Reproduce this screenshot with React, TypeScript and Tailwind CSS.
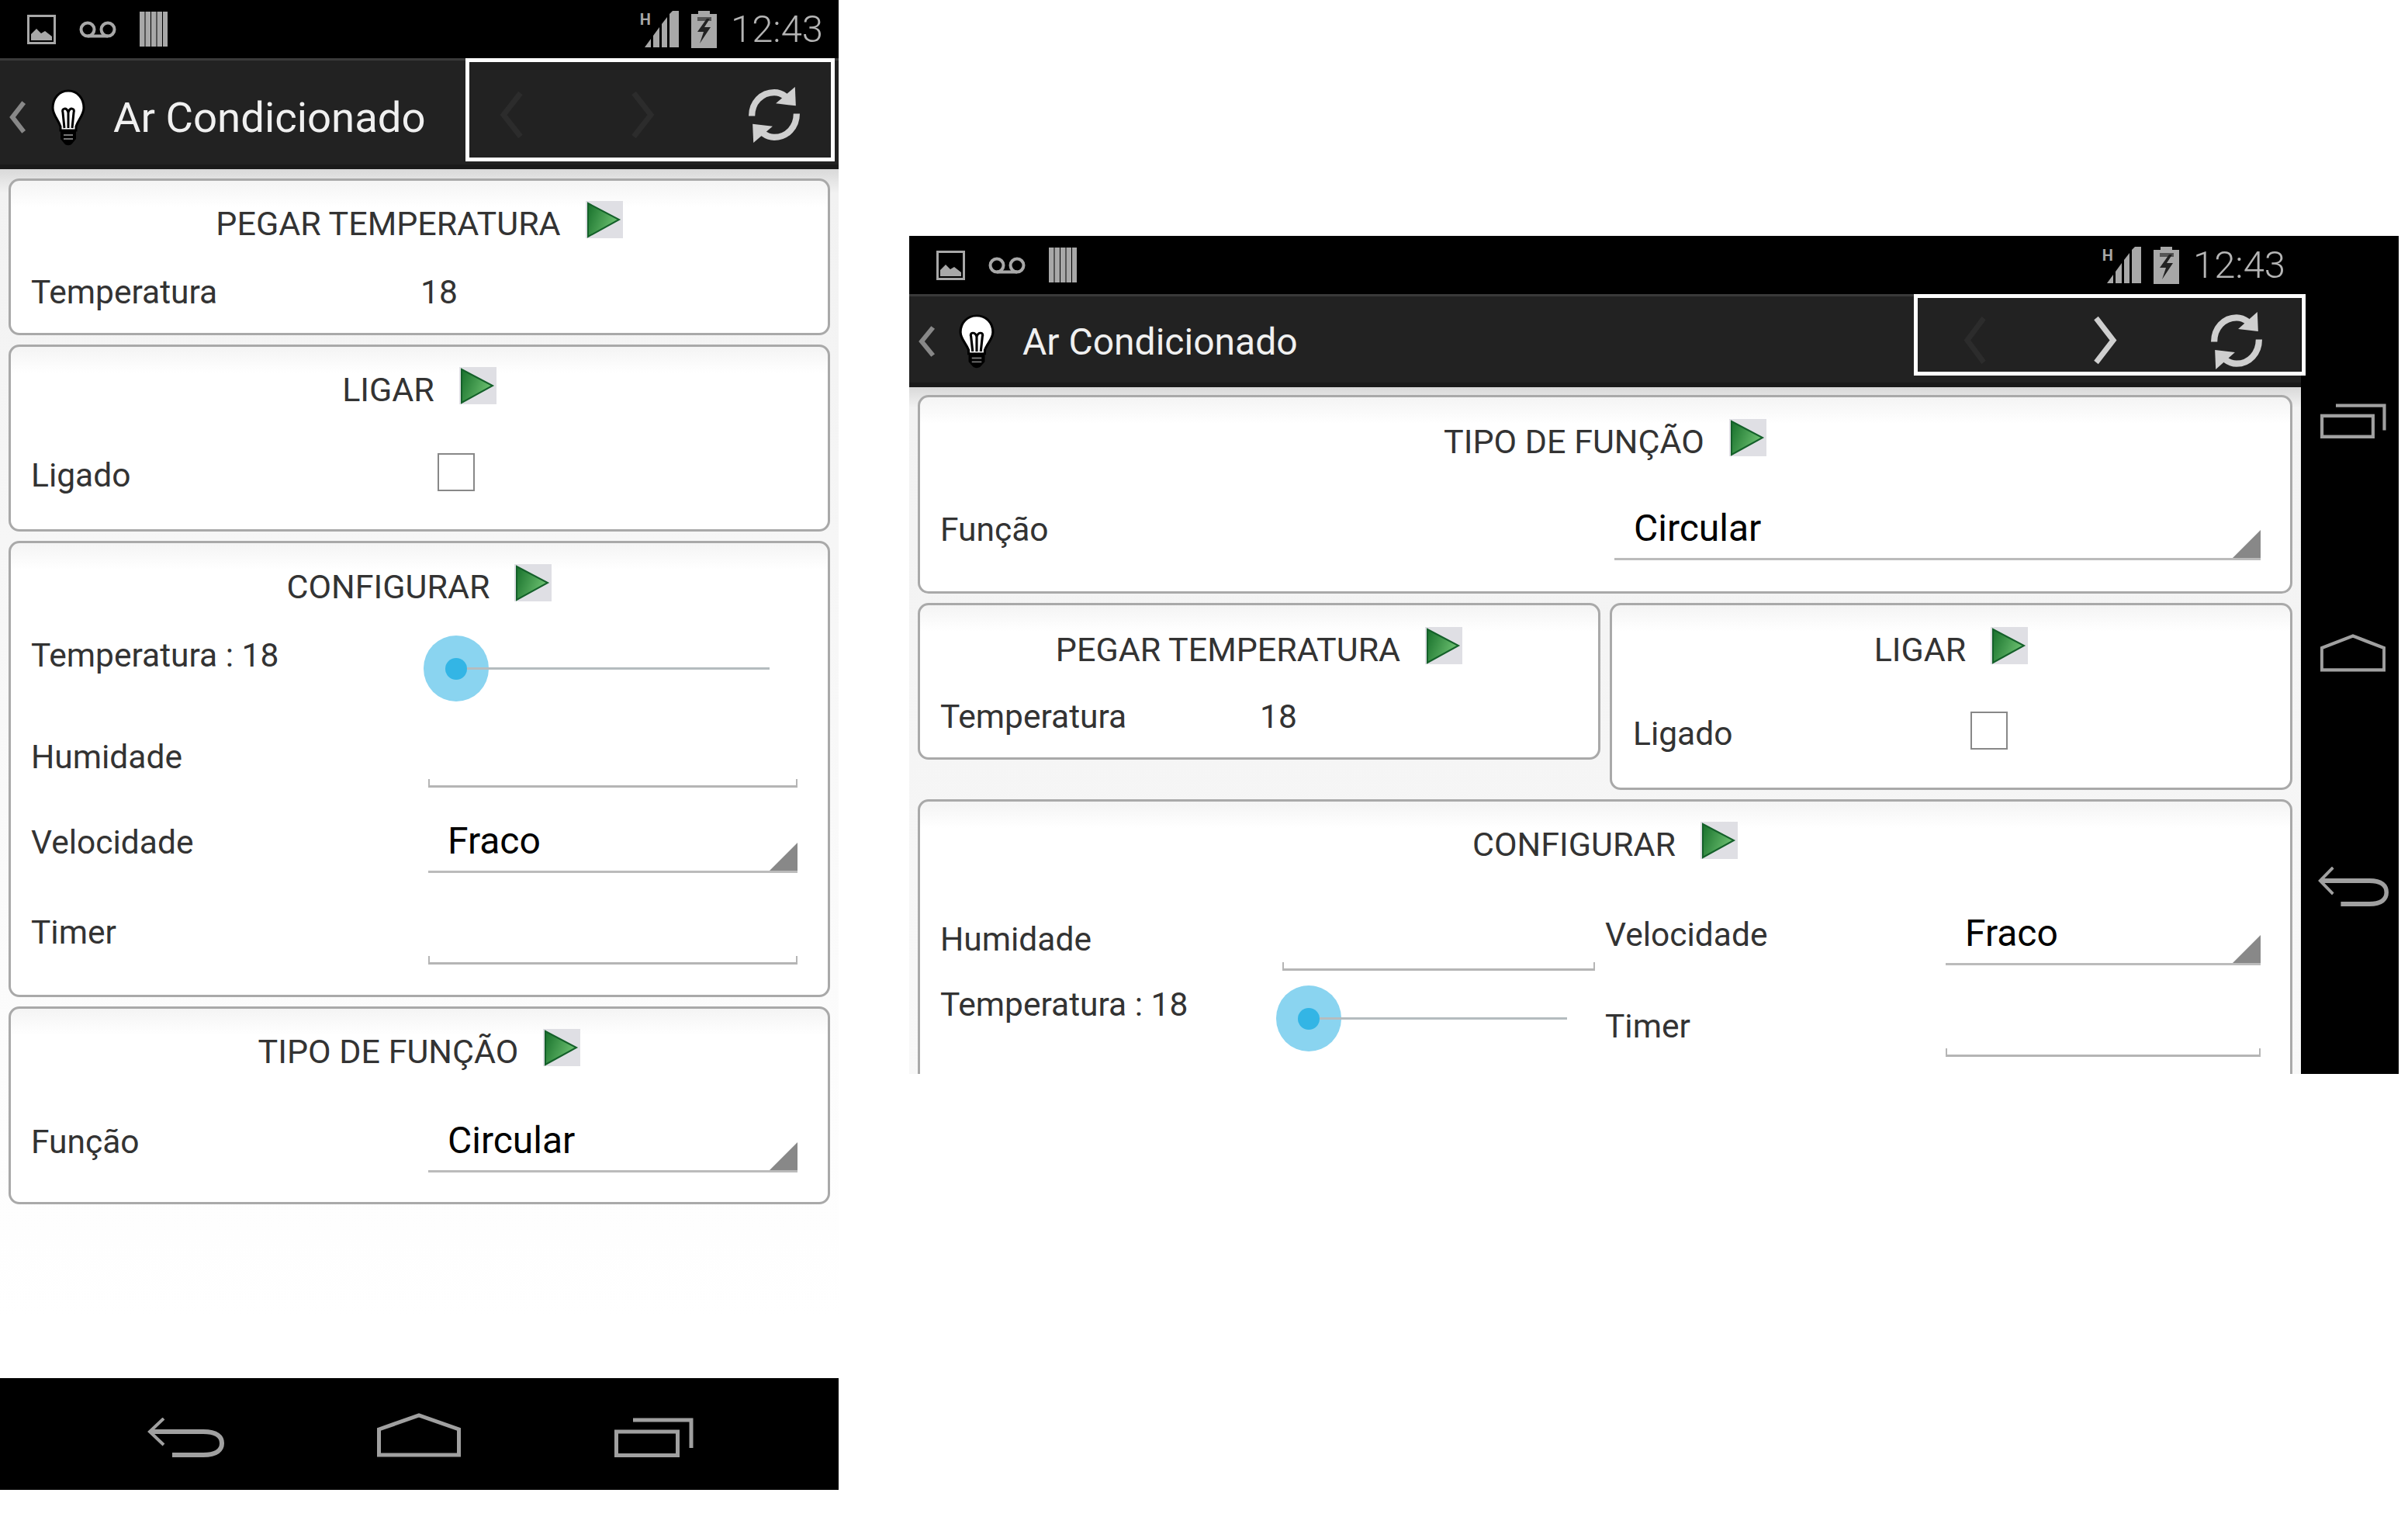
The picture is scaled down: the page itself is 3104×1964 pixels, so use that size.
import type { ReactNode } from "react";

const ICON = "#a8a8a8";

function PictureIcon() {
  return (
    <svg width="37" height="38" viewBox="0 0 37 38">
      <rect x="1.5" y="1.5" width="34" height="35" fill="none" stroke={ICON} strokeWidth="3" />
      <path d="M5 33V25L12 18L18 24L23 21L32 28V33Z" fill={ICON} />
    </svg>
  );
}

function VoicemailIcon() {
  return (
    <svg width="48" height="22" viewBox="0 0 48 22">
      <circle cx="11" cy="11" r="8.5" fill="none" stroke={ICON} strokeWidth="4" />
      <circle cx="37" cy="11" r="8.5" fill="none" stroke={ICON} strokeWidth="4" />
      <path d="M11 19.5H37" stroke={ICON} strokeWidth="4" />
    </svg>
  );
}

function BarcodeIcon() {
  return (
    <svg width="36" height="45" viewBox="0 0 36 45">
      {[0, 7.5, 15, 22.5, 30].map((x) => (
        <rect key={x} x={x} y="0" width="6.5" height="45" fill={ICON} />
      ))}
    </svg>
  );
}

function SignalIcon() {
  return (
    <svg width="44" height="47" viewBox="0 0 44 47">
      <path d="M0 47L8 36V47Z" fill={ICON} />
      <path d="M11 47V32L19 21V47Z" fill={ICON} />
      <path d="M22 47V17L29 8V47Z" fill={ICON} />
      <path d="M32 47V4L36 0H44V47Z" fill={ICON} />
    </svg>
  );
}

function BatteryIcon() {
  return (
    <svg width="33" height="48" viewBox="0 0 33 48">
      <path d="M9 0H24V4H33V48H0V4H9Z" fill={ICON} />
      <path d="M8 8H26V13H8Z" fill="#555" />
      <path d="M20 10L8 27H16L11 42L25 21H17L24 10Z" fill="#222" />
    </svg>
  );
}

function Chevron({ dir, color, w, h, sw = 7 }: { dir: "left" | "right"; color: string; w: number; h: number; sw?: number }) {
  const d = dir === "left" ? "M28 3L6 31L28 59" : "M5 3L27 31L5 59";
  return (
    <svg width={w} height={h} viewBox="0 0 33 62" preserveAspectRatio="none" className="shrink-0">
      <path d={d} fill="none" stroke={color} strokeWidth={sw} />
    </svg>
  );
}

function RefreshIcon({ w, h }: { w: number; h: number }) {
  return (
    <svg width={w} height={h} viewBox="0 0 64 71" preserveAspectRatio="none" className="shrink-0">
      <path d="M4 37C4 20 16 7 32 7C38 7 42 9 46 12" fill="none" stroke="#cfcfcf" strokeWidth="8" />
      <path d="M58 0L59 24L34 21Z" fill="#cfcfcf" />
      <path d="M60 34C60 51 48 64 32 64C26 64 22 62 18 59" fill="none" stroke="#cfcfcf" strokeWidth="8" />
      <path d="M6 71L5 47L30 50Z" fill="#cfcfcf" />
    </svg>
  );
}

function BulbIcon({ w, h }: { w: number; h: number }) {
  return (
    <svg width={w} height={h} viewBox="0 0 44 73" preserveAspectRatio="none" className="shrink-0">
      <path d="M22 2C10 2 2 12 2 24C2 33 9 39 12 48V53H32V48C35 39 42 33 42 24C42 12 34 2 22 2Z" fill="#fff" stroke="#000" strokeWidth="3" />
      <path d="M17 50L15 30C13 24 20 23 22 30C24 23 31 24 29 30L27 50M22 30V50" fill="none" stroke="#000" strokeWidth="3" />
      <path d="M12 52H32V64L27 70C25 73 19 73 17 70L12 64Z" fill="#000" />
      <path d="M16 59H28M16 64H28" stroke="#777" strokeWidth="2" />
    </svg>
  );
}

function BackNav({ w, h }: { w: number; h: number }) {
  return (
    <svg width={w} height={h} viewBox="0 0 99 51" preserveAspectRatio="none" className="shrink-0">
      <path d="M21 1L3 18L21 35" fill="none" stroke="#a0a0a0" strokeWidth="4" />
      <path d="M4 18H72C90 18 96 25 96 33C96 41 90 48 72 48H32" fill="none" stroke="#a0a0a0" strokeWidth="6" />
    </svg>
  );
}

function HomeNav({ w, h }: { w: number; h: number }) {
  return (
    <svg width={w} height={h} viewBox="0 0 108 57" preserveAspectRatio="none" className="shrink-0">
      <path d="M2.5 21L54 3L105.5 21V54H2.5Z" fill="none" stroke="#a0a0a0" strokeWidth="5" />
    </svg>
  );
}

function RecentsNav({ w, h }: { w: number; h: number }) {
  return (
    <svg width={w} height={h} viewBox="0 0 102 51" preserveAspectRatio="none" className="shrink-0">
      <path d="M24 3H99V39" fill="none" stroke="#a0a0a0" strokeWidth="5" />
      <rect x="2.5" y="18" width="79" height="30.5" fill="none" stroke="#a0a0a0" strokeWidth="5" />
    </svg>
  );
}

function PlayIcon({ id }: { id: string }) {
  return (
    <svg width="48" height="48" viewBox="0 0 48 48" className="shrink-0">
      <defs>
        <linearGradient id={id} x1="0" y1="0" x2="1" y2="0.4">
          <stop offset="0" stopColor="#17702b" />
          <stop offset="1" stopColor="#6cc070" />
        </linearGradient>
      </defs>
      <rect width="48" height="48" fill="#dfdfe4" />
      <path d="M3 3L43 24L3 46Z" fill={`url(#${id})`} stroke="#14602a" strokeWidth="2" />
    </svg>
  );
}

function Title({ text, id, className }: { text: string; id: string; className?: string }) {
  return (
    <div className={`flex h-[48px] items-start justify-center gap-[32px] ${className ?? ""}`}>
      <span className="mt-[5px] text-[43px] leading-[48px] text-[#333]">{text}</span>
      <PlayIcon id={id} />
    </div>
  );
}

function Label({ children, className }: { children: ReactNode; className?: string }) {
  return <div className={`text-[42.5px] leading-[45px] text-[#333] ${className ?? ""}`}>{children}</div>;
}

function Card({ children, className }: { children: ReactNode; className?: string }) {
  return (
    <div className={`shrink-0 rounded-[14px] border-[3px] border-[#a9a9a9] bg-linear-to-b from-[#f4f4f4] to-white to-[34px] ${className ?? ""}`}>
      {children}
    </div>
  );
}

function Select({ value, className }: { value: string; className?: string }) {
  return (
    <div className={`relative h-[62px] shrink-0 border-b-[3px] border-[#bbb] pl-[25px] text-[48px] leading-[41px] text-black ${className ?? ""}`}>
      {value}
      <div className="absolute bottom-0 right-0 h-[36px] w-[36px] bg-[#888] [clip-path:polygon(100%_0,100%_100%,0_100%)]" />
    </div>
  );
}

function TextInput({ className }: { className?: string }) {
  return <div className={`shrink-0 self-end h-[11px] border-x-2 border-b-[3px] border-[#b5b5b5] ${className ?? ""}`} />;
}

function Checkbox({ className }: { className?: string }) {
  return <div className={`h-[49px] w-[48px] shrink-0 border-2 border-[#888] bg-white ${className ?? ""}`} />;
}

function Slider({ className }: { className?: string }) {
  return (
    <div className={`flex h-[85px] shrink-0 items-center ${className ?? ""}`}>
      <div className="flex h-[85px] w-[84px] shrink-0 items-center justify-center rounded-full bg-[#8ad4f0]">
        <div className="h-[28px] w-[28px] rounded-full bg-[#33b5e5]" />
      </div>
      <div className="-ml-[28px] h-[3px] flex-1 bg-[#b4bcbf]" />
    </div>
  );
}

function StatusBar() {
  return (
    <div className="flex h-[75px] shrink-0 items-center justify-between bg-black pl-[35px] pr-[20px]">
      <div className="flex items-center gap-[30px]">
        <PictureIcon />
        <VoicemailIcon />
        <BarcodeIcon />
      </div>
      <div className="flex items-center">
        <span className="-mr-[8px] mb-[25px] text-[20px] font-bold leading-[20px] text-[#a8a8a8]">H</span>
        <SignalIcon />
        <div className="ml-[16px]">
          <BatteryIcon />
        </div>
        <span className="ml-[18px] text-[49px] font-light leading-[48px] text-[#b5b5b5]">12:43</span>
      </div>
    </div>
  );
}

function Portrait() {
  return (
    <div className="flex h-[1920px] w-[1081px] shrink-0 flex-col">
      <StatusBar />
      <div className="flex h-[143px] shrink-0 items-start border-t-[3px] border-b-[6px] border-t-[#3a3a3a] border-b-[#1a1a1a] bg-[#222]">
        <div className="flex h-[134px] w-[600px] items-center pl-[12px] pt-[12px]">
          <Chevron dir="left" color="#888" w={22} h={42} sw={9} />
          <div className="ml-[32px]">
            <BulbIcon w={44} h={73} />
          </div>
          <span className="ml-[36px] text-[54.5px] leading-[56px] text-[#f0f0f0]">Ar Condicionado</span>
        </div>
        <div className="-mt-[3px] flex h-[133px] w-[476px] items-center border-[5px] border-white pl-[38px] pt-[12px]">
          <Chevron dir="left" color="#2c2c2c" w={33} h={62} />
          <div className="ml-[136px]">
            <Chevron dir="right" color="#2c2c2c" w={33} h={62} />
          </div>
          <div className="ml-[120px]">
            <RefreshIcon w={66} h={72} />
          </div>
        </div>
      </div>
      <div className="flex h-[1558px] shrink-0 flex-col gap-[12px] bg-linear-to-b from-[#d9d9d9] via-[#f2f2f2] via-[2%] to-white to-[95%] px-[11px] pt-[12px]">
        <Card className="h-[202px] pt-[26px]">
          <Title text="PEGAR TEMPERATURA" id="p1" />
          <div className="mt-[47px] flex pl-[26px]">
            <Label className="w-[502px]">Temperatura</Label>
            <Label>18</Label>
          </div>
        </Card>
        <Card className="h-[241px] pt-[26px]">
          <Title text="LIGAR" id="p2" />
          <div className="mt-[63px] flex pl-[26px]">
            <Label className="mt-[6px] w-[524px]">Ligado</Label>
            <Checkbox />
          </div>
        </Card>
        <Card className="h-[588px] pt-[27px]">
          <Title text="CONFIGURAR" id="p3" />
          <div className="mt-[44px] flex pl-[26px]">
            <Label className="mt-[3px] w-[506px]">Temperatura : 18</Label>
            <Slider className="w-[446px]" />
          </div>
          <div className="mt-[49px] flex h-[62px] pl-[26px]">
            <Label className="w-[512px]">Humidade</Label>
            <TextInput className="w-[476px]" />
          </div>
          <div className="mt-[48px] flex pl-[26px]">
            <Label className="w-[512px]">Velocidade</Label>
            <Select value="Fraco" className="w-[476px]" />
          </div>
          <div className="mt-[54px] flex h-[64px] pl-[26px]">
            <Label className="w-[512px]">Timer</Label>
            <TextInput className="w-[476px]" />
          </div>
        </Card>
        <Card className="h-[255px] pt-[26px]">
          <Title text="TIPO DE FUNÇÃO" id="p4" />
          <div className="mt-[75px] flex pl-[26px]">
            <Label className="w-[512px]">Função</Label>
            <Select value="Circular" className="w-[476px]" />
          </div>
        </Card>
      </div>
      <div className="flex h-[144px] shrink-0 items-end bg-black pb-[42px] pl-[190px]">
        <BackNav w={99} h={51} />
        <div className="ml-[197px]">
          <HomeNav w={108} h={57} />
        </div>
        <div className="ml-[198px]">
          <RecentsNav w={102} h={51} />
        </div>
      </div>
    </div>
  );
}

function Landscape() {
  return (
    <div className="ml-[91px] mt-[304px] flex h-[1080px] w-[1920px] shrink-0">
      <div className="flex w-[1794px] shrink-0 flex-col overflow-visible">
        <StatusBar />
        <div className="flex h-[120px] shrink-0 items-start justify-between border-t-[3px] border-b-[6px] border-t-[#3a3a3a] border-b-[#1a1a1a] bg-[#222]">
          <div className="flex h-[111px] items-center pl-[12px] pt-[5px]">
            <Chevron dir="left" color="#888" w={22} h={40} sw={9} />
            <div className="ml-[30px]">
              <BulbIcon w={46} h={70} />
            </div>
            <span className="ml-[36px] mt-[2px] text-[48px] leading-[58px] text-[#f0f0f0]">Ar Condicionado</span>
          </div>
          <div className="relative z-10 -mr-[6px] -mt-[3px] flex h-[105px] w-[505px] items-center border-[5px] border-white pl-[58px] pt-[14px]">
            <Chevron dir="left" color="#2c2c2c" w={32} h={63} />
            <div className="ml-[135px]">
              <Chevron dir="right" color="#cfcfcf" w={33} h={63} />
            </div>
            <div className="ml-[120px]">
              <RefreshIcon w={66} h={74} />
            </div>
          </div>
        </div>
        <div className="flex h-[885px] shrink-0 flex-col overflow-hidden bg-linear-to-b from-[#d9d9d9] via-[#f2f2f2] via-[3%] to-[#f8f8f8] px-[11px] pt-[10px]">
          <Card className="h-[256px] pt-[28px]">
            <Title text="TIPO DE FUNÇÃO" id="l1" />
            <div className="mt-[72px] flex pl-[26px]">
              <Label className="w-[869px]">Função</Label>
              <Select value="Circular" className="w-[833px]" />
            </div>
          </Card>
          <div className="mt-[12px] flex shrink-0 items-start gap-[12px]">
            <Card className="h-[202px] w-[880px] pt-[28px]">
              <Title text="PEGAR TEMPERATURA" id="l2" />
              <div className="mt-[45px] flex pl-[26px]">
                <Label className="w-[412px]">Temperatura</Label>
                <Label>18</Label>
              </div>
            </Card>
            <Card className="h-[241px] w-[880px] pt-[28px]">
              <Title text="LIGAR" id="l3" />
              <div className="mt-[61px] flex pl-[27px]">
                <Label className="mt-[6px] w-[435px]">Ligado</Label>
                <Checkbox />
              </div>
            </Card>
          </div>
          <Card className="mt-[12px] h-[400px] pt-[26px]">
            <Title text="CONFIGURAR" id="l4" />
            <div className="flex pl-[26px]">
              <div className="w-[857px] shrink-0">
                <div className="mt-[81px] flex h-[63px]">
                  <Label className="w-[441px]">Humidade</Label>
                  <TextInput className="w-[403px]" />
                </div>
                <div className="mt-[19px] flex">
                  <Label className="mt-[2px] w-[433px]">Temperatura : 18</Label>
                  <Slider className="w-[375px]" />
                </div>
              </div>
              <div className="flex-1">
                <div className="mt-[75px] flex">
                  <Label className="w-[439px]">Velocidade</Label>
                  <Select value="Fraco" className="h-[60px] w-[406px]" />
                </div>
                <div className="mt-[56px] flex h-[62px]">
                  <Label className="w-[439px]">Timer</Label>
                  <TextInput className="w-[406px]" />
                </div>
              </div>
            </div>
          </Card>
        </div>
      </div>
      <div className="flex w-[126px] shrink-0 flex-col items-center justify-between bg-black py-[216px] pl-[8px]">
        <RecentsNav w={85} h={45} />
        <HomeNav w={84} h={49} />
        <BackNav w={91} h={51} />
      </div>
    </div>
  );
}

export default function App() {
  return (
    <div className="flex h-[1964px] w-[3104px] items-start overflow-hidden bg-white font-['Roboto',sans-serif]">
      <Portrait />
      <Landscape />
    </div>
  );
}
